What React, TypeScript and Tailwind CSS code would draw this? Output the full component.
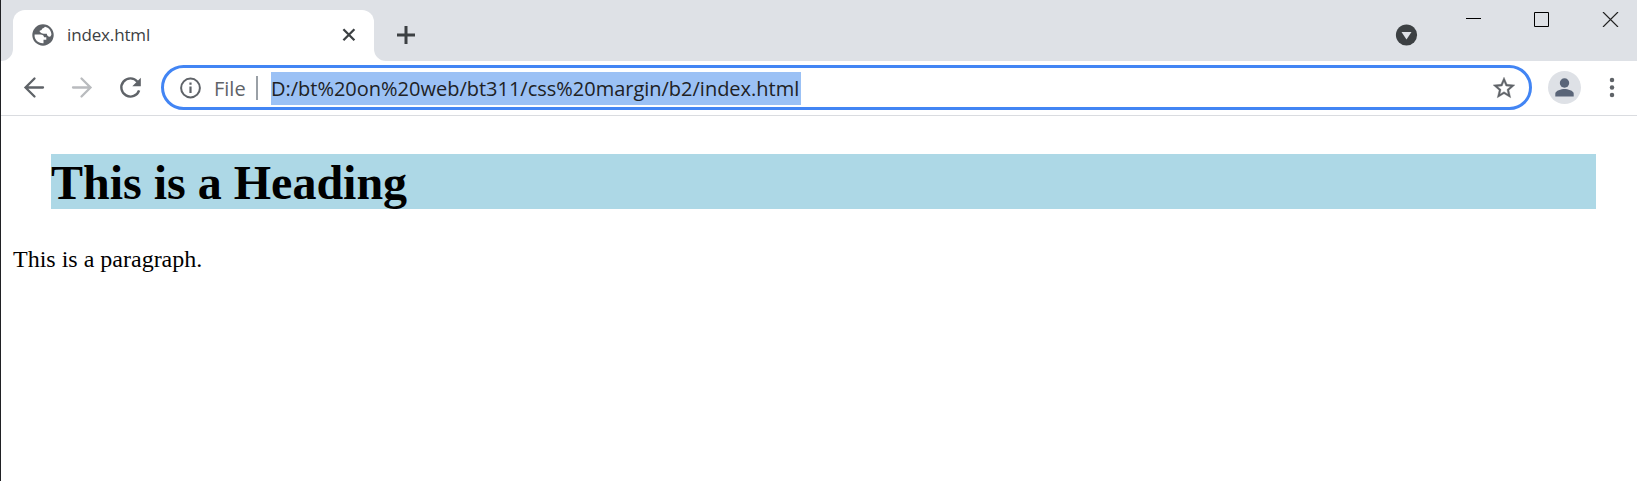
import React from "react";

function TabStrip() {
  return (
    <header className="flex h-[61px] items-start bg-[#dee1e6]">
      <div className="flex h-[61px] items-end pt-[10px]">
        <svg className="h-3 w-3" viewBox="0 0 12 12">
          <path d="M12 0A12 12 0 0 1 0 12H12Z" fill="#fff" />
        </svg>
        <div className="flex h-[51px] w-[361px] items-center rounded-t-[12px] bg-white pl-[19px] pr-[13px] pb-[2px]">
          <svg className="h-[22px] w-[22px] shrink-0" viewBox="0 0 22 22">
            <circle cx="11" cy="11" r="10.7" fill="#5f6368" />
            <path d="M2.6 10.6H8.5C10.8 10.6 11.8 11.5 12 13.2H14.3V15.7H11.5V19.3C6.4 19.7 2 15.6 2.6 10.6Z" fill="#fff" />
            <path d="M13 2.7C16.8 3.4 19.4 6.8 19.4 10.7L18.4 12.6C15.8 12.8 15.1 11.8 14.8 9.8C11.2 10 8.2 9.2 7.4 6.9C8.6 6.8 10 6 10.2 4.6C11 4.4 12 3.9 13 2.7Z" fill="#fff" />
          </svg>
          <span className="ml-[13px] grow font-['Open_Sans','Noto_Sans',sans-serif] text-[17px] leading-[24px] tracking-[-0.15px] text-[#3c4043]">
            index.html
          </span>
          <svg className="h-[24px] w-[24px] shrink-0" viewBox="0 0 24 24" fill="none" stroke="#3c4043" strokeWidth="2.3">
            <path d="M6.4 6.2 17.4 17.2M17.4 6.2 6.4 17.2" />
          </svg>
        </div>
        <svg className="h-3 w-3" viewBox="0 0 12 12">
          <path d="M0 0A12 12 0 0 0 12 12H0Z" fill="#fff" />
        </svg>
      </div>
      <svg className="mt-[23px] ml-[8px] h-6 w-6" viewBox="0 0 24 24" fill="none" stroke="#3c4043" strokeWidth="3">
        <path d="M3 12H21M12 3V21" />
      </svg>
      <div className="grow" />
      <svg className="mt-[24px] h-[22px] w-[23px]" viewBox="0 0 23 22">
        <circle cx="11.5" cy="11" r="10.6" fill="#3c4043" />
        <path d="M6.5 8H16.5L11.5 15.5Z" fill="#dee1e6" />
      </svg>
      <svg className="mt-3 ml-[47px] h-[15px] w-[17px]" viewBox="0 0 17 15" fill="none" stroke="#000">
        <path d="M1 6.5H16" />
      </svg>
      <svg className="mt-3 ml-[51px] h-[15px] w-[17px]" viewBox="0 0 17 15" fill="none" stroke="#000">
        <path d="M1.5 .5H15.5V14.5H1.5Z" />
      </svg>
      <svg className="mt-3 mr-[18px] ml-[52px] h-[15px] w-[17px]" viewBox="0 0 17 15" fill="none" stroke="#222" strokeWidth="1.2">
        <path d="M1 0 16 15M16 0 1 15" />
      </svg>
    </header>
  );
}

function Toolbar() {
  return (
    <div className="flex h-[55px] items-start border-b border-[#dadce0] bg-white pt-1">
      <svg className="mt-[8px] ml-[19px] h-[28px] w-[28px]" viewBox="0 0 28 28" fill="none" stroke="#5f6368" strokeWidth="2.3">
        <path d="M23 14.5H6M14.5 5.5 5.5 14.5 14.5 23.5" strokeLinecap="round" strokeLinejoin="miter" />
      </svg>
      <svg className="mt-[8px] ml-[20px] h-[28px] w-[28px]" viewBox="0 0 28 28" fill="none" stroke="#b9bbbe" strokeWidth="2.3">
        <path d="M5 14.5H22M13.5 5.5 22.5 14.5 13.5 23.5" strokeLinecap="round" />
      </svg>
      <svg className="mt-[8px] ml-[20px] h-[28px] w-[28px]" viewBox="0 0 28 28">
        <path d="M21.5 8.7A9.1 9.1 0 1 0 23.1 17.3" fill="none" stroke="#5f6368" strokeWidth="2.4" />
        <path d="M24.8 4.7V13.2H16.3Z" fill="#5f6368" />
      </svg>

      <div className="ml-[17px] flex h-[45px] w-[1371px] items-center rounded-full border-[3px] border-[#4285f4] bg-white pr-[12px] pl-[15px]">
        <svg className="h-[23px] w-[23px] shrink-0" viewBox="0 0 23 23" fill="none" stroke="#5f6368" strokeWidth="2">
          <circle cx="11.5" cy="12" r="9.4" />
          <path d="M11.5 10.5V17M11.5 6.6V8.8" strokeWidth="2.2" />
        </svg>
        <span className="mt-[2px] ml-[12px] w-[32px] font-['Open_Sans','Noto_Sans',sans-serif] text-[20px] leading-[33px] text-[#5f6368]">
          File
        </span>
        <span className="ml-[10px] h-6 w-[2px] bg-[#9aa0a6]" />
        <span className="mt-[2px] ml-[13px] h-[33px] w-[530px] overflow-hidden bg-[#9bc1f5] font-['Open_Sans','Noto_Sans',sans-serif] text-[20px] leading-[33px] whitespace-nowrap tracking-[-0.01px] text-[#202124]">
          D:/bt%20on%20web/bt311/css%20margin/b2/index.html
        </span>
        <span className="grow" />
        <svg className="h-[26px] w-[26px] shrink-0" viewBox="0 0 24 24" fill="#5f6368" stroke="#5f6368" strokeWidth=".35">
          <path d="M22 9.24l-7.19-.62L12 2 9.19 8.63 2 9.24l5.46 4.73L5.82 21 12 17.27 18.18 21l-1.63-7.03L22 9.24zM12 15.4l-3.76 2.27 1-4.28-3.32-2.88 4.38-.38L12 6.1l1.71 4.04 4.38.38-3.32 2.88 1 4.28L12 15.4z" />
        </svg>
      </div>

      <svg className="mt-[6px] ml-[16px] h-[33px] w-[33px]" viewBox="0 0 33 33">
        <circle cx="16.5" cy="16.5" r="16.5" fill="#dee1e6" />
        <circle cx="16.5" cy="12" r="4.7" fill="#5a6578" />
        <path d="M7.3 25.5V22.8C7.3 19.7 13.4 18.1 16.5 18.1S25.7 19.7 25.7 22.8V25.5Z" fill="#5a6578" />
      </svg>
      <svg className="mt-[11px] ml-[27px] h-6 w-2" viewBox="0 0 8 24" fill="#5f6368">
        <circle cx="4" cy="4" r="2.25" />
        <circle cx="4" cy="11.5" r="2.25" />
        <circle cx="4" cy="19" r="2.25" />
      </svg>
    </div>
  );
}

export default function App() {
  return (
    <div className="flex h-[481px] w-[1637px] flex-col overflow-hidden border-l border-[#202124] bg-white">
      <TabStrip />
      <Toolbar />
      <main className="font-['Liberation_Serif',serif] text-black">
        <h1 className="mt-[38px] ml-[50px] h-[55px] w-[1545px] bg-[#add8e6] text-[48px] leading-[57px] font-bold">
          This is a Heading
        </h1>
        <p className="mt-[37px] ml-3 text-[24px] leading-[27px]">This is a paragraph.</p>
      </main>
    </div>
  );
}
